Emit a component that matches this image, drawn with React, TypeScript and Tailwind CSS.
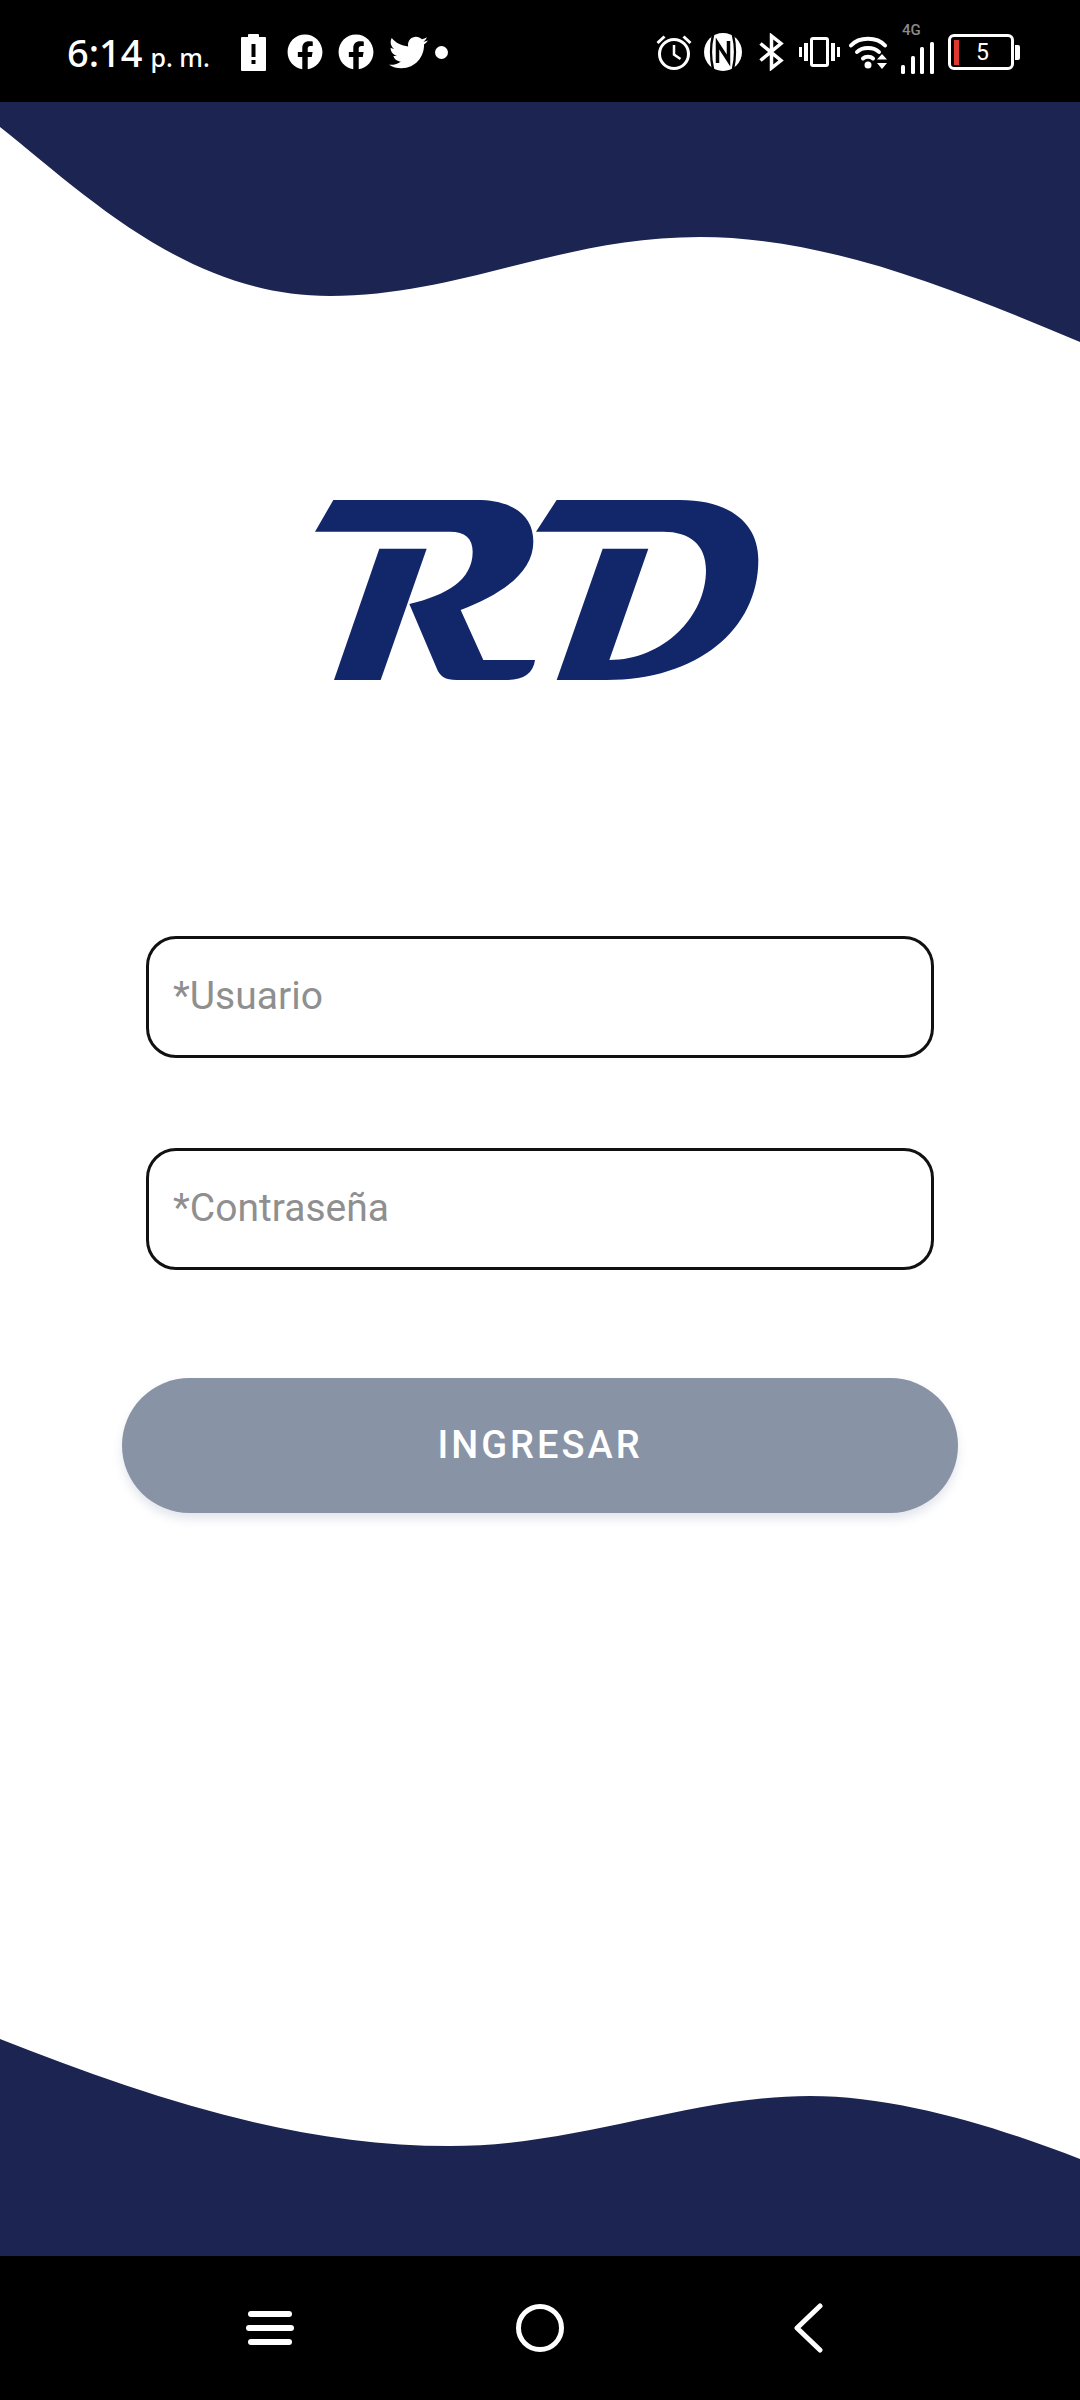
import { FaFacebook, FaTwitter } from "react-icons/fa";

const NAVY = "#1c2551";

function BatteryAlertIcon() {
  return (
    <svg width="25" height="38" viewBox="0 0 25 38" className="ml-[30px]">
      <path
        fillRule="evenodd"
        fill="#fff"
        d="M7 2a1 1 0 0 1 1-1h9a1 1 0 0 1 1 1v2h6a1 1 0 0 1 1 1v32a1 1 0 0 1-1 1H1a1 1 0 0 1-1-1V5a1 1 0 0 1 1-1h6ZM10.500 11v13h4V11ZM10.500 27v4h4v-4Z"
      />
    </svg>
  );
}

function AlarmIcon() {
  return (
    <svg width="36" height="36" viewBox="0 0 36 36" fill="none" stroke="#fff">
      <circle cx="18" cy="20" r="14.500" strokeWidth="3" />
      <path d="M18 11v9.500l6.500 4.500" strokeWidth="2.500" />
      <path d="M1.500 9 8.500 2.500M34.500 9l-7-6.500" strokeWidth="3" />
    </svg>
  );
}

function NfcIcon() {
  return (
    <svg width="38" height="38" viewBox="0 0 38 38">
      <circle cx="19" cy="19" r="19" fill="#fff" />
      <path d="M9 2C6.500 12 6.500 26 9 36" stroke="#000" strokeWidth="2.500" fill="none" />
      <path d="M29 2C31.500 12 31.500 26 29 36" stroke="#000" strokeWidth="2.500" fill="none" />
      <path d="M13.500 30V10.500L24.500 27.500V8" stroke="#000" strokeWidth="3.500" fill="none" />
    </svg>
  );
}

function BluetoothIcon() {
  return (
    <svg width="25" height="38" viewBox="0 0 25 38" fill="none" stroke="#fff" strokeWidth="3.500">
      <path d="M1.500 10.500 22 27.500 12.500 35V3L22 10.500 1.500 27.500" />
    </svg>
  );
}

function VibrateIcon() {
  return (
    <svg width="41" height="30" viewBox="0 0 41 30" fill="#fff">
      <rect x="0" y="10" width="3" height="10" />
      <rect x="5" y="6" width="4" height="18" />
      <rect x="12.500" y="1.500" width="16" height="27" rx="1.500" fill="none" stroke="#fff" strokeWidth="3" />
      <rect x="32" y="6" width="4" height="18" />
      <rect x="38" y="10" width="3" height="10" />
    </svg>
  );
}

function WifiIcon() {
  return (
    <svg width="40" height="33" viewBox="0 0 40 33" fill="none" stroke="#fff" strokeWidth="4" strokeLinecap="round">
      <path d="M2 9.500C10 0.500 28 0.500 36 9.500" />
      <path d="M8 16C13 10.500 25 10.500 30 16" />
      <path d="M14 22.500C16.500 20 21.500 20 24 22.500" />
      <circle cx="19" cy="29" r="3.500" fill="#fff" stroke="none" />
      <path d="M33 18 38 23.500H28ZM33 33 38 27H28Z" fill="#fff" stroke="none" />
    </svg>
  );
}

function SignalIcon() {
  return (
    <div className="relative h-[44px] w-[33px]">
      <span className="absolute top-[-7px] left-[1px] font-['Roboto',sans-serif] text-[15px] leading-[15px] font-medium text-[#8a8a8a]">
        4G
      </span>
      <svg width="33" height="32" viewBox="0 0 33 32" fill="#fff" className="absolute bottom-0 left-0">
        <rect x="0" y="23" width="4" height="9" rx="1.500" />
        <rect x="10" y="14" width="4" height="18" rx="1.500" />
        <rect x="19" y="5" width="4" height="27" rx="1.500" />
        <rect x="29" y="0" width="4" height="32" rx="1.500" />
      </svg>
    </div>
  );
}

function BatteryIcon() {
  return (
    <div className="flex items-center">
      <div className="flex h-[36px] w-[66px] items-center rounded-[6px] border-[3px] border-white pl-[3px]">
        <div className="h-[25px] w-[5px] bg-[#e0382f]" />
        <span className="ml-[17px] font-['Roboto',sans-serif] text-[23px] leading-none text-white">5</span>
      </div>
      <div className="ml-[1px] h-[15px] w-[5px] rounded-r-[2px] bg-white" />
    </div>
  );
}

function StatusBar() {
  return (
    <div className="flex h-[102px] items-center justify-between bg-black pt-[2px] pr-[60px] pl-[67px] text-white">
      <div className="flex items-center">
        <span className="w-[144px] font-['Noto_Sans',sans-serif] text-[38px] leading-none font-medium whitespace-nowrap">
          6:14
          <span className="ml-[8px] text-[25px]">p. m.</span>
        </span>
        <BatteryAlertIcon />
        <FaFacebook className="ml-[21px] text-[36px]" />
        <FaFacebook className="ml-[15px] text-[36px]" />
        <FaTwitter className="ml-[15px] text-[39px]" />
        <div className="ml-[7px] h-[13px] w-[13px] rounded-full bg-white" />
      </div>
      <div className="flex items-center">
        <AlarmIcon />
        <div className="ml-[12px]"><NfcIcon /></div>
        <div className="ml-[17px]"><BluetoothIcon /></div>
        <div className="ml-[15px]"><VibrateIcon /></div>
        <div className="ml-[9px]"><WifiIcon /></div>
        <div className="ml-[12px]"><SignalIcon /></div>
        <div className="ml-[14px]"><BatteryIcon /></div>
      </div>
    </div>
  );
}

function Logo() {
  return (
    <svg viewBox="0 0 1500 720" width="500" height="240" className="mx-auto mt-[128px] block" fill="#12266a">
      <path d="M130 90 L560 90 C660 90 730 130 730 215 C730 310 630 375 512 420 L580 570 L735 570 C730 610 700 630 650 630 L500 630 C465 630 450 620 440 595 L358 402 C470 375 548 330 548 245 C548 205 525 185 480 185 L75 185 Z" />
      <path d="M268 236 L410 236 L272 630 L132 630 Z" />
      <path d="M800 90 L1170 90 C1320 90 1405 160 1405 270 C1405 480 1220 630 950 630 L800 630 L938 236 L1075 236 L958 570 C1120 570 1248 440 1248 300 C1248 225 1200 185 1120 185 L738 185 Z" />
    </svg>
  );
}

function Field({ placeholder }: { placeholder: string }) {
  return (
    <input
      type="text"
      placeholder={placeholder}
      className="h-[122px] w-[788px] rounded-[30px] border-[3px] border-[#111] bg-white pb-[2px] pl-[24px] font-['Roboto',sans-serif] text-[39px] outline-none placeholder:text-[#8f8f8f]"
    />
  );
}

export default function App() {
  return (
    <div className="flex h-[2400px] w-[1080px] flex-col bg-white">
      <StatusBar />
      <div className="flex flex-1 flex-col items-center">
        <svg viewBox="0 0 1080 240" width="1080" height="240" className="block shrink-0" fill={NAVY}>
          <path d="M0 0H1080V240C960 190 830 135 700 135C560 135 460 194 330 194C190 194 90 97 0 25Z" />
        </svg>
        <Logo />
        <div className="mt-[226px] flex flex-col gap-[90px]">
          <Field placeholder="*Usuario" />
          <Field placeholder="*Contraseña" />
        </div>
        <button
          type="button"
          className="mt-[108px] h-[135px] w-[836px] rounded-full bg-[#8993a6] font-['Roboto',sans-serif] text-[38px] font-medium tracking-[3px] text-white shadow-[0_6px_10px_rgba(100,115,150,0.18)]"
        >
          INGRESAR
        </button>
        <svg viewBox="0 0 1080 220" width="1080" height="220" className="mt-auto block shrink-0" fill={NAVY}>
          <path d="M0 3C140 58 290 110 450 110C580 110 690 60 810 60C900 60 1000 92 1080 123V220H0Z" />
        </svg>
      </div>
      <div className="flex h-[144px] items-center bg-black pl-[246px]">
        <div className="flex w-[48px] flex-col gap-[8px]">
          <div className="mx-[2px] h-[6px] rounded-full bg-white" />
          <div className="h-[6px] rounded-full bg-white" />
          <div className="mx-[2px] h-[6px] rounded-full bg-white" />
        </div>
        <div className="ml-[222px] h-[48px] w-[48px] rounded-full border-[5px] border-white" />
        <svg width="30" height="50" viewBox="0 0 30 50" fill="none" stroke="#fff" strokeWidth="5" strokeLinecap="round" strokeLinejoin="round" className="ml-[230px]">
          <path d="M26 3 3 25l23 22" />
        </svg>
      </div>
    </div>
  );
}
